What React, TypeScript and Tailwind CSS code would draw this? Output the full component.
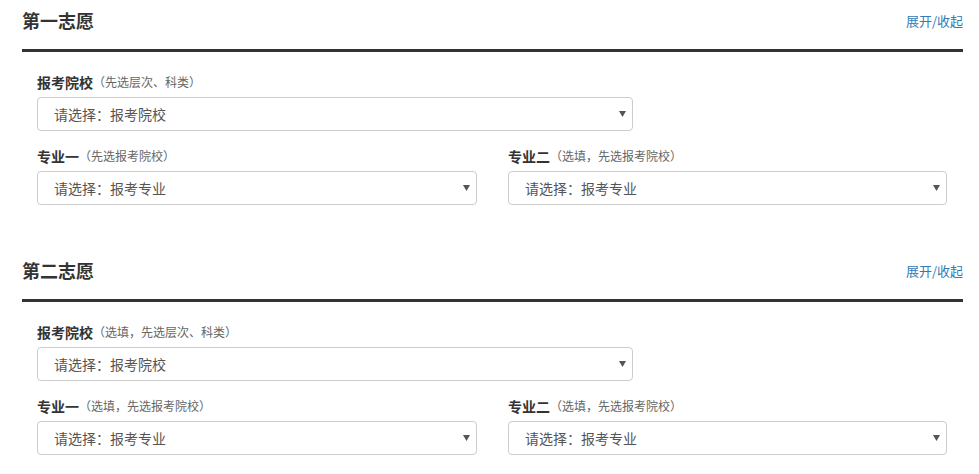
const FONT = "font-['Microsoft_YaHei','Noto_Sans_CJK_SC',sans-serif]";

type SelectBoxProps = {
  placeholder: string;
  className?: string;
};

function SelectBox({ placeholder, className = "" }: SelectBoxProps) {
  return (
    <div
      className={`flex h-[34px] items-center justify-between rounded-[4px] border border-[#ccc] bg-white pl-[16px] pr-[6px] text-[14px] leading-[20px] text-[#555] ${className}`}
    >
      <span>{placeholder}</span>
      <svg width="7" height="6" viewBox="0 0 7 6" className="shrink-0">
        <polygon points="0,0 7,0 3.5,6" fill="#555" />
      </svg>
    </div>
  );
}

function Label({ name, hint }: { name: string; hint: string }) {
  return (
    <div className="mb-[5px] flex h-[20px] items-center text-[#333]">
      <span className="text-[14px] font-bold leading-[20px]">{name}</span>
      <span className="text-[12px] leading-[20px] text-[#666]">{hint}</span>
    </div>
  );
}

type SectionProps = {
  title: string;
  schoolHint: string;
  major1Hint: string;
  major2Hint: string;
  className?: string;
};

function Section({ title, schoolHint, major1Hint, major2Hint, className = "" }: SectionProps) {
  return (
    <section className={className}>
      <div className="flex h-[49px] items-start justify-between pt-[8px]">
        <h2 className="text-[18px] font-bold leading-[25px] text-[#333]">{title}</h2>
        <a className="text-[13px] leading-[25px] text-[#337ab7]" href="#">
          展开/收起
        </a>
      </div>
      <div className="h-[3px] bg-[#333]" />

      <div className="pl-[15px] pt-[20px]">
        <Label name="报考院校" hint={schoolHint} />
        <SelectBox placeholder="请选择：报考院校" className="w-[596px]" />

        <div className="mt-[15px] flex gap-[31px]">
          <div className="w-[440px]">
            <Label name="专业一" hint={major1Hint} />
            <SelectBox placeholder="请选择：报考专业" />
          </div>
          <div className="w-[439px]">
            <Label name="专业二" hint={major2Hint} />
            <SelectBox placeholder="请选择：报考专业" />
          </div>
        </div>
      </div>
    </section>
  );
}

export default function App() {
  return (
    <main className={`min-h-screen w-[979px] bg-white ${FONT}`}>
      <div className="ml-[22px] w-[941px]">
        <Section
          title="第一志愿"
          schoolHint="（先选层次、科类）"
          major1Hint="（先选报考院校）"
          major2Hint="（选填，先选报考院校）"
        />
        <Section
          className="mt-[45px]"
          title="第二志愿"
          schoolHint="（选填，先选层次、科类）"
          major1Hint="（选填，先选报考院校）"
          major2Hint="（选填，先选报考院校）"
        />
      </div>
    </main>
  );
}
